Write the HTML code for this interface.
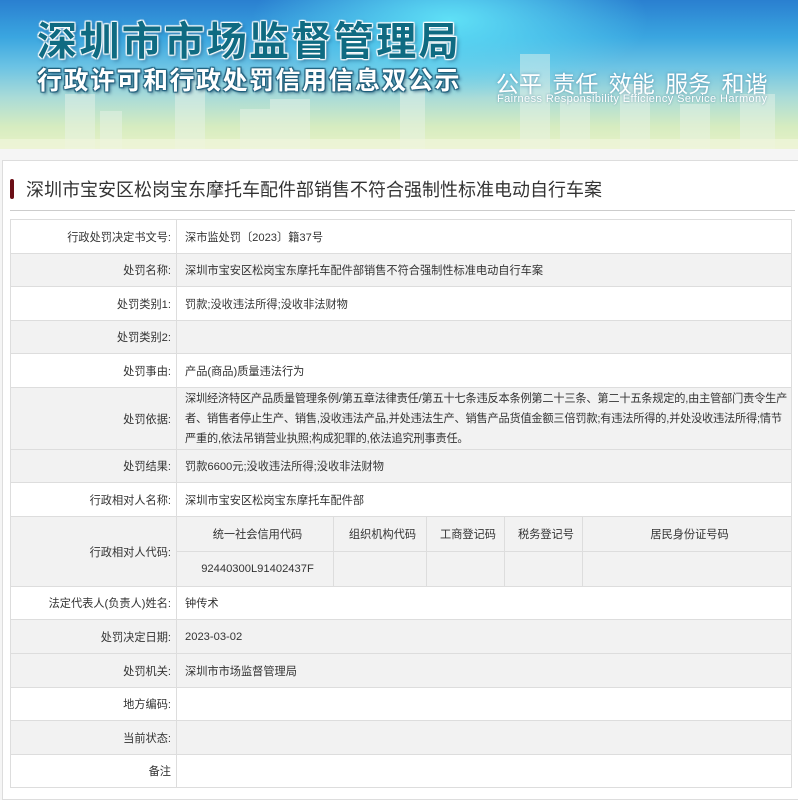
<!DOCTYPE html>
<html><head><meta charset="utf-8"><style>
*{margin:0;padding:0;box-sizing:border-box}
body{width:798px;height:797px;overflow:hidden;background:#f5f5f5;font-family:"Liberation Sans","Noto Sans CJK SC",sans-serif;color:#333}
.banner{position:absolute;left:0;top:0;width:798px;height:149px;overflow:hidden;
background:linear-gradient(180deg,#2a7fd0 0%,#3aa6e0 25%,#6cc3e4 45%,#a9dbd8 65%,#d6ecc0 85%,#e8f2c8 100%)}
.banner .glow{position:absolute;left:250px;top:-60px;width:400px;height:160px;border-radius:50%;background:radial-gradient(#5fe0f6 0%,rgba(80,210,240,0) 70%)}
.bld{position:absolute;bottom:0;background:rgba(235,245,235,.45)}
.t1{position:absolute;left:37px;top:9px;font-size:40px;font-weight:bold;letter-spacing:2.4px;color:#0f6b82;
text-shadow:0 0 2px #fff,1px 1px 1px #fff,-1px -1px 1px #fff,1px -1px 1px #fff,-1px 1px 1px #fff,2px 2px 4px rgba(0,40,80,.5);white-space:nowrap}
.t2{position:absolute;left:37px;top:61px;font-size:25px;font-weight:bold;letter-spacing:1.5px;color:#fff;
text-shadow:1px 1px 1px #1d5d7a,-1px -1px 1px #1d5d7a,1px -1px 1px #1d5d7a,-1px 1px 1px #1d5d7a,2px 2px 3px rgba(0,40,80,.6);white-space:nowrap}
.t3{position:absolute;left:496px;top:65px;font-size:23px;color:#fff;white-space:nowrap;word-spacing:4px;text-shadow:0 0 3px rgba(40,100,140,.6)}
.t4{position:absolute;left:497px;top:93px;font-size:11px;letter-spacing:0.4px;color:#fff;white-space:nowrap;text-shadow:0 0 2px rgba(40,100,140,.6)}
.panel{position:absolute;left:2px;top:160px;width:800px;height:640px;background:#fff;border:1px solid #ddd}
.title{position:absolute;left:7px;top:15px;width:785px;height:35px;border-bottom:1px solid #ccc}
.title i{position:absolute;left:0;top:3px;width:4px;height:20px;background:#6b0f16;border-radius:2px}
.title span{position:absolute;left:16px;top:0;font-size:18px;color:#333;white-space:nowrap}
table{position:absolute;left:10px;top:219px;width:782px;border-collapse:collapse;font-size:11.2px}
td{border:1px solid #ddd;padding:0 3px 0 8px;vertical-align:middle;color:#333}
td.l{width:166px;text-align:right;padding-right:5px}
.g td{background:#f2f2f2}
.sub td{text-align:center;border-top:none}
</style></head><body>
<div class="banner"><div class="glow"></div>
<div class="bld" style="left:65px;width:30px;height:55px"></div>
<div class="bld" style="left:100px;width:22px;height:38px"></div>
<div class="bld" style="left:175px;width:30px;height:80px"></div>
<div class="bld" style="left:240px;width:30px;height:40px"></div>
<div class="bld" style="left:270px;width:40px;height:50px"></div>
<div class="bld" style="left:400px;width:25px;height:70px"></div>
<div class="bld" style="left:520px;width:30px;height:95px"></div>
<div class="bld" style="left:560px;width:30px;height:50px"></div>
<div class="bld" style="left:620px;width:30px;height:65px"></div>
<div class="bld" style="left:680px;width:30px;height:45px"></div>
<div class="bld" style="left:740px;width:35px;height:55px"></div>
<div class="bld" style="left:0;width:798px;height:10px;background:rgba(240,245,220,.7)"></div>
<div class="t1">深圳市市场监督管理局</div>
<div class="t2">行政许可和行政处罚信用信息双公示</div>
<div class="t3">公平 责任 效能 服务 和谐</div>
<div class="t4">Fairness Responsibility Efficiency Service Harmony</div>
</div>
<div class="panel"><div class="title"><i></i><span>深圳市宝安区松岗宝东摩托车配件部销售不符合强制性标准电动自行车案</span></div></div>
<table>
<tr style="height:34px"><td class="l">行政处罚决定书文号:</td><td colspan="5">深市监处罚〔2023〕籍37号</td></tr>
<tr class="g" style="height:33px"><td class="l">处罚名称:</td><td colspan="5">深圳市宝安区松岗宝东摩托车配件部销售不符合强制性标准电动自行车案</td></tr>
<tr style="height:34px"><td class="l">处罚类别1:</td><td colspan="5">罚款;没收违法所得;没收非法财物</td></tr>
<tr class="g" style="height:33px"><td class="l">处罚类别2:</td><td colspan="5"></td></tr>
<tr style="height:34px"><td class="l">处罚事由:</td><td colspan="5">产品(商品)质量违法行为</td></tr>
<tr class="g" style="height:62px"><td class="l">处罚依据:</td><td colspan="5" style="line-height:20px;letter-spacing:-0.2px">深圳经济特区产品质量管理条例/第五章法律责任/第五十七条违反本条例第二十三条、第二十五条规定的,由主管部门责令生产者、销售者停止生产、销售,没收违法产品,并处违法生产、销售产品货值金额三倍罚款;有违法所得的,并处没收违法所得;情节严重的,依法吊销营业执照;构成犯罪的,依法追究刑事责任。</td></tr>
<tr class="g" style="height:33px"><td class="l">处罚结果:</td><td colspan="5">罚款6600元;没收违法所得;没收非法财物</td></tr>
<tr style="height:34px"><td class="l">行政相对人名称:</td><td colspan="5">深圳市宝安区松岗宝东摩托车配件部</td></tr>
<tr class="g sub" style="height:35px"><td class="l" rowspan="2" style="text-align:right">行政相对人代码:</td><td style="width:157px">统一社会信用代码</td><td style="width:93px">组织机构代码</td><td style="width:78px">工商登记码</td><td style="width:78px">税务登记号</td><td>居民身份证号码</td></tr>
<tr class="g sub" style="height:35px"><td>92440300L91402437F</td><td></td><td></td><td></td><td></td></tr>
<tr style="height:33px"><td class="l">法定代表人(负责人)姓名:</td><td colspan="5">钟传术</td></tr>
<tr class="g" style="height:34px"><td class="l">处罚决定日期:</td><td colspan="5">2023-03-02</td></tr>
<tr class="g" style="height:34px"><td class="l">处罚机关:</td><td colspan="5">深圳市市场监督管理局</td></tr>
<tr style="height:33px"><td class="l">地方编码:</td><td colspan="5"></td></tr>
<tr class="g" style="height:34px"><td class="l">当前状态:</td><td colspan="5"></td></tr>
<tr style="height:33px"><td class="l">备注</td><td colspan="5"></td></tr>
</table>
</body></html>
